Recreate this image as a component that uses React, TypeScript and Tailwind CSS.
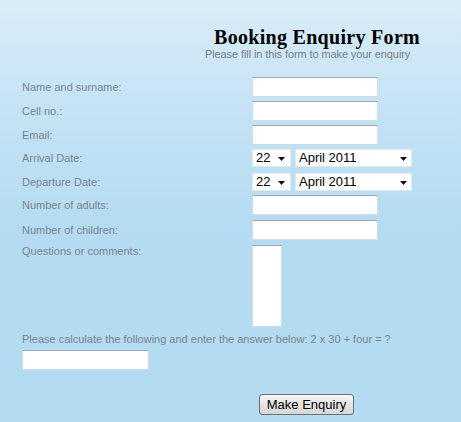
import React from 'react';

// Booking enquiry form on a pale blue gradient page

const inputCls =
  'block h-[20px] w-[126px] bg-white border border-[#cfdbe5] border-t-[#9ea9b3] outline-none';

function Row({
  label,
  children,
  className = '',
  top = false,
}: {
  label: string;
  children: React.ReactNode;
  className?: string;
  top?: boolean;
}) {
  return (
    <div className={`flex ${top ? 'items-start' : 'items-center'} ${className}`}>
      <label className={`w-[230px] shrink-0 text-[11px] leading-[14px] text-[#7a848e] ${top ? '-mt-[1px]' : ''}`}>
        {label}
      </label>
      {children}
    </div>
  );
}

function Caret({ right }: { right: string }) {
  return (
    <svg
      width="7"
      height="4"
      viewBox="0 0 7 4"
      className={`pointer-events-none absolute top-[8px] ${right}`}
    >
      <path d="M0 0h7L3.5 4z" fill="#111" />
    </svg>
  );
}

function DateSelect() {
  return (
    <div className="flex h-[18px] gap-[4px]">
      <div className="relative h-[18px]">
        <select className="block h-[18px] w-[39px] appearance-none bg-white pl-[3px] text-[13px] leading-[16px] text-black border border-[#e2eaf0] outline-none">
          <option>22</option>
        </select>
        <Caret right="right-[6px]" />
      </div>
      <div className="relative h-[18px]">
        <select className="block h-[18px] w-[117px] appearance-none bg-white pl-[3px] text-[13px] leading-[16px] text-black border border-[#e2eaf0] outline-none">
          <option>April 2011</option>
        </select>
        <Caret right="right-[5px]" />
      </div>
    </div>
  );
}

export default function App() {
  return (
    <div
      className="h-[422px] w-[461px] overflow-hidden bg-[linear-gradient(180deg,#daecf8_0px,#c4e3f5_110px,#b4dbf2_230px,#b3dbf2_422px)] pt-[26px]"
      style={{ fontFamily: '"Liberation Sans", Arial, sans-serif' }}
    >
      <h1
        className="pl-[214px] text-[20px] font-bold leading-[22px] tracking-[0.3px] text-black"
        style={{ fontFamily: '"Liberation Serif", Georgia, serif' }}
      >
        Booking Enquiry Form
      </h1>
      <p className="pl-[205px] text-[11px] leading-[13px] tracking-[-0.1px] text-[#7b7f84]">
        Please fill in this form to make your enquiry
      </p>

      <form className="mt-[16px] pl-[22px]">
        <Row label="Name and surname:">
          <input className={inputCls} />
        </Row>
        <Row label="Cell no.:" className="mt-[4px]">
          <input className={inputCls} />
        </Row>
        <Row label="Email:" className="mt-[4px]">
          <input className={inputCls} />
        </Row>
        <Row label="Arrival Date:" className="mt-[4px]">
          <DateSelect />
        </Row>
        <Row label="Departure Date:" className="mt-[6px]">
          <DateSelect />
        </Row>
        <Row label="Number of adults:" className="mt-[4px]">
          <input className={inputCls} />
        </Row>
        <Row label="Number of children:" className="mt-[5px]">
          <input className={inputCls} />
        </Row>
        <Row label="Questions or comments:" className="mt-[5px]" top>
          <textarea className="block h-[82px] w-[30px] resize-none bg-white border border-[#cfdbe5] border-t-[#9ea9b3] outline-none" />
        </Row>

        <p className="mt-[6px] text-[11px] leading-[13px] text-[#7a848e]">
          Please calculate the following and enter the answer below: 2 x 30 + four = ?
        </p>
        <input className="mt-[4px] block h-[20px] w-[127px] bg-white border border-[#cfdbe5] border-t-[#9ea9b3] outline-none" />

        <div className="mt-[22px] pl-[237px]">
          <button
            type="button"
            className="h-[21px] w-[95px] rounded-[3px] border border-[#707070] bg-[linear-gradient(180deg,#f6f6f6,#e4e4e4_50%,#d6d6d6)] text-[13px] leading-[19px] text-black"
          >
            Make Enquiry
          </button>
        </div>
      </form>
    </div>
  );
}
